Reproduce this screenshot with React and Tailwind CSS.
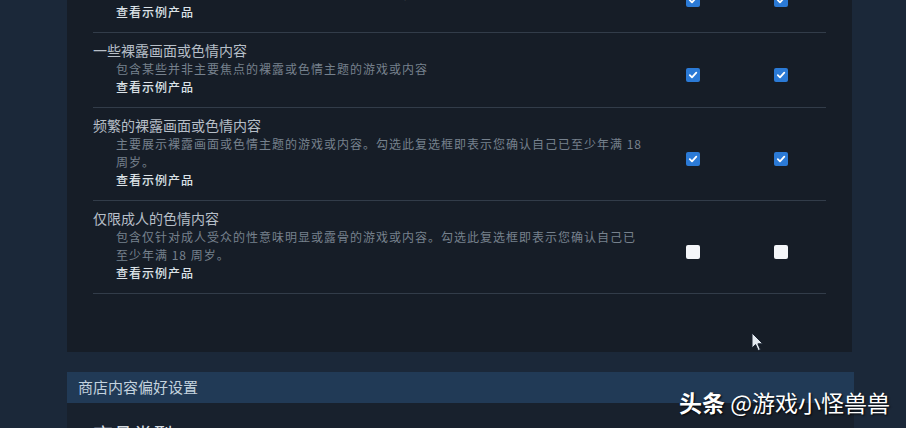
const rows = [
    {
        title: '一般成人内容',
        desc: ['包含可能不适合所有年龄段的成人主题的游戏或内容'],
        checked: true,
    },
    {
        title: '一些裸露画面或色情内容',
        desc: ['包含某些并非主要焦点的裸露或色情主题的游戏或内容'],
        checked: true,
    },
    {
        title: '频繁的裸露画面或色情内容',
        desc: [
            '主要展示裸露画面或色情主题的游戏或内容。勾选此复选框即表示您确认自己已至少年满 18',
            '周岁。',
        ],
        checked: true,
    },
    {
        title: '仅限成人的色情内容',
        desc: [
            '包含仅针对成人受众的性意味明显或露骨的游戏或内容。勾选此复选框即表示您确认自己已',
            '至少年满 18 周岁。',
        ],
        checked: false,
    },
];

function Checkbox({ checked }) {
    if (!checked) {
        return <div className="mt-[13px] w-[14px] h-[14px] rounded-[2px] bg-[#f4f6f9]" />;
    }
    return (
        <div className="mt-[13px] w-[14px] h-[14px] rounded-[2px] bg-[#2b7ad6] flex items-center justify-center">
            <svg width="10" height="10" viewBox="0 0 10 10">
                <path d="M1.8 5.2 L4 7.4 L8.3 2.6" fill="none" stroke="#ffffff" strokeWidth="1.8" strokeLinecap="round" strokeLinejoin="round" />
            </svg>
        </div>
    );
}

function ContentRow({ row }) {
    return (
        <div className="flex border-b border-[#323c49] pt-[7px] pb-[11px]">
            <div className="w-[556px] flex-none">
                <div className="text-[14px] leading-[20px] text-[#b7bfc8]">{row.title}</div>
                <div className="pl-[23px] text-[12px] leading-[18px] tracking-[1px] text-[#76818d]">
                    {row.desc.map((line, i) => (
                        <div key={i} className="whitespace-nowrap">{line}</div>
                    ))}
                </div>
                <div className="pl-[23px] text-[12px] leading-[18px] tracking-[1px] font-medium text-[#dde3e8]">
                    查看示例产品
                </div>
            </div>
            <div className="w-[88px] flex-none flex items-center justify-center">
                <Checkbox checked={row.checked} />
            </div>
            <div className="w-[88px] flex-none flex items-center justify-center">
                <Checkbox checked={row.checked} />
            </div>
        </div>
    );
}

export default function App() {
    return (
        <div
            className="relative w-[906px] h-[428px] overflow-hidden bg-[#1b2839]"
            style={{ fontFamily: '"Noto Sans CJK SC", "Noto Sans", sans-serif' }}
        >
            {/* mature content panel */}
            <div className="ml-[67px] w-[785px] -mt-[42px] bg-[#161d27] px-[26px] pb-[58px]">
                {rows.map((row, i) => (
                    <ContentRow key={i} row={row} />
                ))}
            </div>

            {/* store preferences header */}
            <div className="ml-[67px] w-[787px] mt-[20px] h-[31px] bg-[#213a56] flex items-center pl-[11px]">
                <span className="text-[15px] text-[#c3d2de]">商店内容偏好设置</span>
            </div>
            <div className="ml-[67px] w-[787px] h-[60px] bg-[#18212d] pl-[26px] pt-[18px]">
                <div className="text-[20px] leading-[28px] text-[#d6dde3]">商品类型</div>
            </div>

            {/* mouse cursor */}
            <svg className="absolute left-[751px] top-[332px]" width="13" height="20" viewBox="0 0 13 20">
                <path d="M1 1 L1 16 L4.6 12.6 L7.2 18.6 L9.4 17.6 L6.9 11.8 L11.8 11.8 Z" fill="#e4eaf0" stroke="#1a2230" strokeWidth="1" strokeLinejoin="round" />
            </svg>

            {/* watermark */}
            <div
                className="absolute left-[679px] top-[387px] text-[23px] leading-[30px] text-white whitespace-nowrap"
                style={{ textShadow: '1px 1px 2px rgba(0,0,0,0.9)' }}
            >
                <span className="font-bold">头条</span> @游戏小怪兽兽
            </div>
        </div>
    );
}
